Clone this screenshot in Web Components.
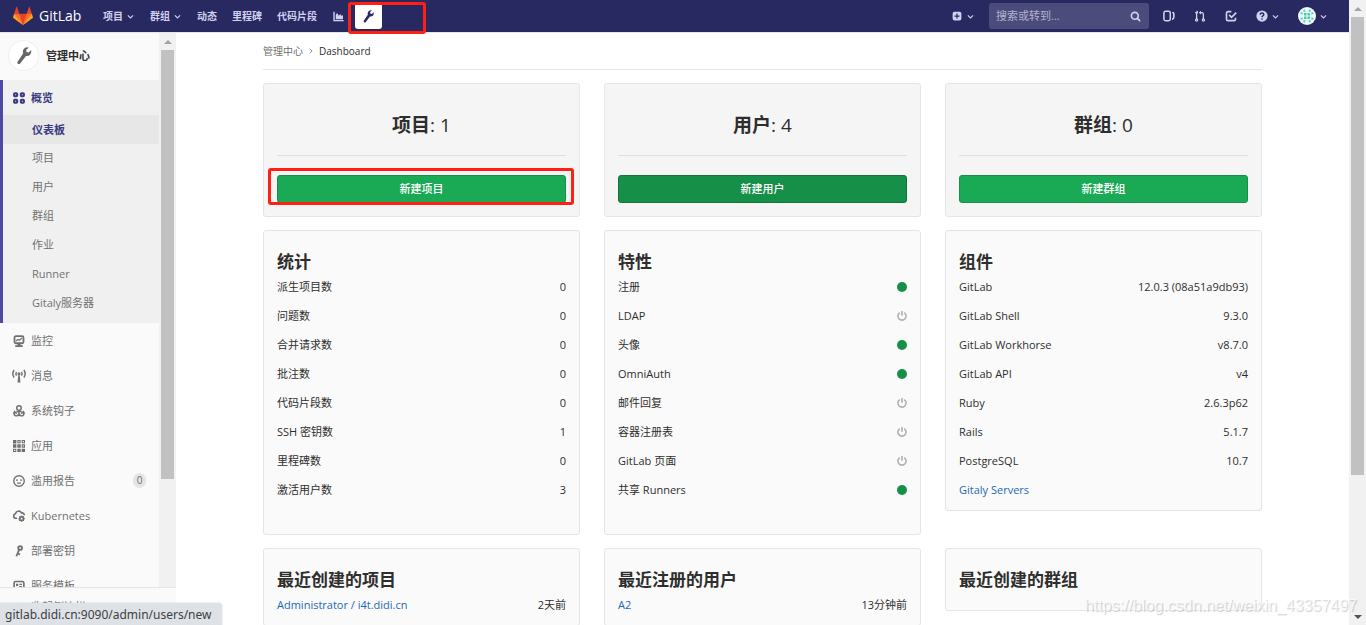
<!DOCTYPE html>
<html lang="zh-CN">
<head>
<meta charset="utf-8">
<title>Dashboard · 管理中心 · GitLab</title>
<style>
html, body { margin: 0; height: 100%; }
body { font: 11px/16px "Open Sans", "Noto Sans CJK SC", sans-serif; color: #2e2e2e; background: #fff; overflow: hidden; }
</style>
</head>
<body>
<admin-app></admin-app>
<script>
const define = (name, html, setup) => {
  const template = document.createElement('template');
  template.innerHTML = html;
  customElements.define(name, class extends HTMLElement {
    constructor() {
      super();
      this.attachShadow({ mode: 'open' }).append(template.content.cloneNode(true));
    }
    connectedCallback() { if (setup) setup(this, this.shadowRoot); }
  });
};

const ICONS = {
  tanuki: ['0 0 36 36', '<path fill="#e24329" d="M2 14l9.38 9v-9l-4-12.28c-.2-.63-1.18-.63-1.38 0zM34 14l-9.38 9v-9l4-12.28c.2-.63 1.18-.63 1.38 0zM18 34.38L3 14h30z"/><path fill="#fc6d26" d="M18 34.38L11.38 14H2l4 11zM18 34.38L24.62 14H34l-4 11z"/><path fill="#fca326" d="M2 14L.1 20.16c-.18.56 0 1.2.5 1.56L18 34.38zM34 14l1.9 6.16c.18.56 0 1.2-.5 1.56L18 34.38z"/>'],
  chevron: ['0 0 8 8', '<path d="M1 2.6l3 3 3-3" fill="none" stroke="currentColor" stroke-width="1.2"/>'],
  right: ['0 0 8 8', '<path d="M2.5 1l3 3-3 3" fill="none" stroke="currentColor" stroke-width="1.1"/>'],
  chart: ['0 0 16 16', '<path d="M.5 1h2v12h13v2H.5zM4 12V5.500L6 3l2.500 4 2-2.500L12 7l2.500-1v6z"/>'],
  wrench: ['0 0 16 16', '<path d="M10.800.300a4 4 0 0 0-3.600 5.500L2.300 13a1.400 1.400 0 0 0 2.300 1.700L9.800 8a4 4 0 0 0 4.500-5.300l-2.200 2.200-1.900-.500-.200-1.900L12.300.600a4 4 0 0 0-1.500-.300z"/>'],
  plus: ['0 0 16 16', '<path fill-rule="evenodd" d="M4 1h8a3 3 0 0 1 3 3v8a3 3 0 0 1-3 3H4a3 3 0 0 1-3-3V4a3 3 0 0 1 3-3zm3 3v3H4v2h3v3h2V9h3V7H9V4z"/>'],
  search: ['0 0 16 16', '<g fill="none" stroke="currentColor" stroke-width="2.400"><circle cx="7" cy="7" r="5"/><path d="M10.700 10.700L14 14" stroke-linecap="round"/></g>'],
  issues: ['0 0 16 16', '<rect x="1.200" y="1.800" width="8.500" height="12.500" rx="2.200" fill="none" stroke="currentColor" stroke-width="2"/><path d="M11.800 2.500h1a2.600 2.600 0 0 1 2.700 2.600v4.400a4.200 4.200 0 0 1-3.500 4v-2.200a2 2 0 0 0 1.300-1.800V5z"/>'],
  merge: ['0 0 16 16', '<g fill="none" stroke="currentColor" stroke-width="1.700"><path d="M3.500 4v8M8 3.500h2.500a2 2 0 0 1 2 2V12"/><circle cx="3.500" cy="13.300" r="1.400"/><circle cx="12.500" cy="13.300" r="1.400"/><path d="M1.500 3.500h3"/></g><path d="M3.500.800a2 2 0 1 1-.100 4zM6.300 3.500L9.300 1v5z"/>'],
  todo: ['0 0 16 16', '<g fill="none" stroke="currentColor" stroke-width="2.200"><path d="M8.500 2.200H4a2 2 0 0 0-2 2v8a2 2 0 0 0 2 2h8a2 2 0 0 0 2-2v-2"/><path d="M5.500 6.500l3.200 3.200L15 3.500"/></g>'],
  help: ['0 0 16 16', '<circle cx="8" cy="8" r="7.500"/><path d="M5.500 6.200Q5.700 4 8 4t2.500 2Q10.500 7 9 8 8 8.500 8 9.800" fill="none" stroke="#292961" stroke-width="1.900"/><circle cx="8" cy="12" r="1.100" fill="#292961"/>'],
  avatar: ['0 0 18 18', '<circle cx="9" cy="9" r="9" fill="#f2f5fa"/><path fill="#3fd5a0" d="M6 6h2.500v2.500H6zm3.500 0H12v2.500H9.500zM6 9.500h2.500V12H6zm3.500 0H12V12H9.500zM6 2l2 2.500H5zm6 0l1 2.500h-3zM6 16l2-2.500H5zm6 0l1-2.500h-3zM2 6l2.500-1v3zm14 0l-2.500-1v3zM2 12l2.500 1v-3zm14 0l-2.500 1v-3z"/>'],
  overview: ['0 0 16 16', '<g fill="none" stroke="currentColor" stroke-width="2.800"><rect x="1.500" y="1.700" width="4" height="4" rx="1"/><rect x="10.500" y="1.700" width="4" height="4" rx="1"/><rect x="1.500" y="10.300" width="4" height="4" rx="1"/><rect x="10.500" y="10.300" width="4" height="4" rx="1"/></g>'],
  monitor: ['0 0 16 16', '<rect x="2" y="1.500" width="12" height="9.500" rx="2" fill="none" stroke="currentColor" stroke-width="2.400"/><path d="M4 8l2.500-2 1.800 1L12 4" fill="none" stroke="currentColor" stroke-width="1.700"/><path d="M6 12h4v1.500h3V16H3v-2.500h3z"/>'],
  broadcast: ['0 0 16 16', '<g fill="none" stroke="currentColor" stroke-width="1.900"><path d="M1.500 0Q-2 5 1.500 10M4.700 2.500Q2.900 5 4.700 7.500M14.500 0q3.500 5 0 10M11.300 2.500q1.800 2.500 0 5"/></g><circle cx="8" cy="5" r="2"/><path d="M7.200 6h1.600L10 16.500H6z"/>'],
  hook: ['0 0 16 16', '<g fill="none" stroke="currentColor" stroke-width="2"><circle cx="8" cy="4" r="3"/><path d="M8 7v8M4.500 8.500h7M2 9.500Q.500 14.500 4.500 14.500 7.500 14 7.500 11.500M14 9.500Q15.500 14.500 11.500 14.500 8.500 14 8.500 11.500M.500 11.500L2.200 9 5 11.500M15.500 11.500L13.800 9 11 11.500"/></g>'],
  apps: ['0 0 16 16', '<path d="M0 0h4.500v4.500H0zm0 5.800h4.500v4.500H0zm5.800 0h4.500v4.500H5.800zm0 5.700h4.500V16H5.800zm5.700 0H16V16h-4.500z"/><g fill="none" stroke="currentColor" stroke-width="1.400"><path d="M6.500.700h3v3h-3zM12.300.700h3v3h-3zM12.300 6.500h3v3h-3zM.700 12.300h3v3h-3z"/></g>'],
  abuse: ['0 0 16 16', '<circle cx="8" cy="8" r="7" fill="none" stroke="currentColor" stroke-width="1.800"/><path d="M4 6h2.500v1.800H4zm5.500 0H12v1.800H9.500zM5.500 10h5v1.700h-5z"/>'],
  cloud: ['0 0 16 16', '<path d="M5.500 11H4a3 3 0 0 1-.800-5.900A4.300 4.300 0 0 1 11.300 4 3 3 0 0 1 15 7" fill="none" stroke="currentColor" stroke-width="2.200"/><circle cx="11.500" cy="11.500" r="2.400" fill="none" stroke="currentColor" stroke-width="2.200"/><path d="M11.500 7.200v2m0 4.600v2M7.200 11.500h2m4.600 0h2M8.500 8.500l1.300 1.300m3.400 3.400l1.300 1.300m0-6l-1.300 1.300m-3.400 3.400l-1.300 1.300" stroke="currentColor" stroke-width="1.500"/>'],
  key: ['0 0 16 16', '<g fill="none" stroke="currentColor" stroke-width="2.500"><circle cx="9.500" cy="4" r="2.500"/><path d="M8.300 6L4.500 15M6 11.500l3.500 1"/></g>'],
  template: ['0 0 16 16', '<rect x="1.500" y="2" width="13" height="12" rx="2" fill="none" stroke="currentColor" stroke-width="2.200"/><path d="M4 5h3v3H4zm4.500 0H12v1.500H8.500zm0 3H12v1.500H8.500zM4 10h8v1.500H4z"/>'],
  collapse: ['0 0 16 16', '<path d="M7 3L2.500 8 7 13M14 3L9.500 8 14 13" fill="none" stroke="currentColor" stroke-width="2.400"/>'],
  on: ['0 0 10 10', '<circle cx="5" cy="5" r="5" fill="#168f48"/>'],
  off: ['0 0 10 10', '<g fill="none" stroke="#b0b0b0" stroke-width="1.600"><path d="M2.800 1.600a4.100 4.100 0 1 0 4.400 0"/><path d="M5 0v4.800"/></g>']
};

define('gl-icon', `<style>
:host { display: inline-flex; flex: none; width: 12px; height: 12px; }
svg { width: 100%; height: 100%; fill: currentColor; overflow: visible; }
</style><svg aria-hidden="true"></svg>`, (host, root) => {
  const [box, body] = ICONS[host.getAttribute('name')];
  const svg = root.querySelector('svg');
  svg.setAttribute('viewBox', box);
  svg.innerHTML = body;
});

define('scroll-track', `<style>
:host { display: flex; flex-direction: column; flex: none; width: 17px; box-sizing: border-box; padding: 0 2px; background: #f1f1f1; }
.arrow { height: 17px; flex: none; display: flex; align-items: center; justify-content: center; }
.arrow::before { content: ""; border: 4px solid transparent; border-top-width: 0; border-bottom-color: #a3a3a3; }
.arrow.down::before { border-width: 4px 4px 0; border-top-color: #505050; }
.thumb { background: #c1c1c1; flex: var(--thumb); }
.rest { flex: var(--rest); }
:host([noend]) .down { display: none; }
</style><div class="arrow"></div><div class="thumb"></div><div class="rest"></div><div class="arrow down"></div>`);

define('red-mark', `<style>
:host { position: absolute; box-sizing: border-box; border: 3px solid #ff2013; border-radius: 3px; pointer-events: none; z-index: 2; }
</style>`);

define('top-bar', `<style>
:host { display: flex; align-items: center; height: 32px; flex: none; background: #292961; color: #d1d1f0; border-bottom: 1px solid #e5e5e5; padding: 0 22px 0 13px; }
a, button { color: inherit; text-decoration: none; font: bold 10px/16px "Open Sans", "Noto Sans CJK SC", sans-serif; background: none; border: 0; padding: 0; display: flex; align-items: center; gap: 4px; white-space: nowrap; }
.brand { color: #fff; gap: 6px; font-size: 14px; font-weight: 500; width: 90px; }
.brand gl-icon { width: 20px; height: 20px; }
nav, .tools { display: flex; align-items: center; gap: 16px; }
gl-icon[name=chevron] { width: 7px; height: 7px; }
gl-icon[name=chart] { width: 11px; height: 11px; }
.links { display: flex; gap: 15px; }
.admin { position: relative; margin-left: -5px; }
.admin a { width: 27px; height: 26px; background: #fff; color: #292961; border-radius: 3px; justify-content: center; }
.admin gl-icon { width: 13px; height: 13px; }
red-mark { left: -7px; top: -1px; width: 78px; height: 32px; }
.tools { margin-left: auto; gap: 19px; }
.tools .new { margin-right: -4px; gap: 5px; }
.tools .new gl-icon[name=plus] { width: 10px; height: 10px; }
form { display: flex; align-items: center; width: 160px; height: 26px; box-sizing: border-box; padding: 0 8px 0 7px; margin-right: -5px; border-radius: 3px; background: #4c4c7c; }
input { flex: 1; min-width: 0; border: 0; padding: 0; background: none; outline: 0; color: #fff; font: 11px/16px "Open Sans", "Noto Sans CJK SC", sans-serif; }
input::placeholder { color: #b4b4d2; opacity: 1; }
form gl-icon { width: 11px; height: 11px; }
.user gl-icon[name=avatar] { width: 18px; height: 18px; }
.help { gap: 4px; }
</style>
<a class="brand" href="#"><gl-icon name="tanuki"></gl-icon>GitLab</a>
<nav>
<button>项目<gl-icon name="chevron"></gl-icon></button>
<button>群组<gl-icon name="chevron"></gl-icon></button>
<div class="links"><a href="#">动态</a><a href="#">里程碑</a><a href="#">代码片段</a></div>
<a href="#" aria-label="实例统计"><gl-icon name="chart"></gl-icon></a>
<div class="admin"><a href="#" aria-label="管理中心"><gl-icon name="wrench"></gl-icon></a><red-mark></red-mark></div>
</nav>
<div class="tools">
<button class="new" aria-label="新建"><gl-icon name="plus"></gl-icon><gl-icon name="chevron"></gl-icon></button>
<form><input type="search" placeholder="搜索或转到..." aria-label="搜索或转到"><gl-icon name="search"></gl-icon></form>
<a href="#" aria-label="议题"><gl-icon name="issues"></gl-icon></a>
<a href="#" aria-label="合并请求"><gl-icon name="merge"></gl-icon></a>
<a href="#" aria-label="待办事项"><gl-icon name="todo"></gl-icon></a>
<button class="help" aria-label="帮助"><gl-icon name="help"></gl-icon><gl-icon name="chevron"></gl-icon></button>
<button class="user" aria-label="用户菜单"><gl-icon name="avatar"></gl-icon><gl-icon name="chevron"></gl-icon></button>
</div>`);

define('side-link', `<style>
:host { display: block; }
a { display: flex; align-items: center; gap: 6px; height: 35px; box-sizing: border-box; padding: 0 13px; color: #707070; text-decoration: none; white-space: nowrap; }
:host([sub]) a { height: 29px; padding-left: 32px; padding-bottom: 2px; }
:host([active]) a { color: #393982; font-weight: bold; border-left: 3px solid #4b4ba3; padding-left: 10px; }
:host([sub][active]) a { background: #e7e7e7; padding: 0 0 0 29px; }
.count { margin-left: auto; min-width: 13px; box-sizing: border-box; height: 15px; border-radius: 8px; background: #e5e5e5; font-size: 10px; line-height: 15px; text-align: center; }
.count:empty { display: none; }
</style><a href="#"><slot></slot><span class="count"></span></a>`, (host, root) => {
  if (host.hasAttribute('icon')) {
    const icon = document.createElement('gl-icon');
    icon.setAttribute('name', host.getAttribute('icon'));
    root.querySelector('a').prepend(icon);
  }
  root.querySelector('.count').textContent = host.getAttribute('count') || '';
});

define('admin-sidebar', `<style>
:host { display: flex; flex-direction: column; width: 176px; flex: none; background: #fafafa; min-height: 0; }
.scroll { flex: 1; min-height: 0; display: flex; overflow: hidden; }
nav { flex: 1; min-width: 0; }
.context { display: flex; align-items: center; gap: 8px; height: 47px; box-sizing: border-box; padding: 0 0 2px 9px; color: #2e2e2e; font-weight: bold; text-decoration: none; }
.context span { display: flex; align-items: center; justify-content: center; width: 29px; height: 29px; border-radius: 50%; background: #fff; box-shadow: 0 0 0 1px #f0f0f0; color: #666; }
.context gl-icon { width: 18px; height: 18px; }
.group { background: #f0f0f0; box-shadow: inset 3px 0 #4b4ba3; padding-bottom: 5px; }
scroll-track { --thumb: 430; --rest: 108; }
button { display: flex; align-items: center; gap: 6px; height: 38px; box-sizing: border-box; flex: none; padding: 0 13px; border: 0; border-top: 1px solid #e5e5e5; background: #fafafa; color: #707070; font: inherit; }
</style>
<div class="scroll"><nav aria-label="管理中心">
<a class="context" href="#"><span><gl-icon name="wrench"></gl-icon></span>管理中心</a>
<div class="group">
<side-link icon="overview" active>概览</side-link>
<side-link sub active>仪表板</side-link>
<side-link sub>项目</side-link><side-link sub>用户</side-link><side-link sub>群组</side-link>
<side-link sub>作业</side-link><side-link sub>Runner</side-link><side-link sub>Gitaly服务器</side-link>
</div>
<side-link icon="monitor">监控</side-link>
<side-link icon="broadcast">消息</side-link>
<side-link icon="hook">系统钩子</side-link>
<side-link icon="apps">应用</side-link>
<side-link icon="abuse" count="0">滥用报告</side-link>
<side-link icon="cloud">Kubernetes</side-link>
<side-link icon="key">部署密钥</side-link>
<side-link icon="template">服务模板</side-link>
</nav><scroll-track noend></scroll-track></div>
<button><gl-icon name="collapse"></gl-icon>收起侧边栏</button>`);

define('count-card', `<style>
:host { display: block; box-sizing: border-box; position: relative; background: #f5f5f5; border: 1px solid #e5e5e5; border-radius: 3px; padding: 27px 13px 13px; text-align: center; }
h3 { margin: 0; font-size: 19px; line-height: 28px; font-weight: bold; }
h3 span { font-weight: 400; }
hr { margin: 16px 0 19px; border: 0; border-top: 1px solid #dfdfdf; }
button { display: block; width: 100%; height: 28px; border: 1px solid #168f48; border-radius: 3px; background: #1aaa55; color: #fff; font: 500 11px/16px "Open Sans", "Noto Sans CJK SC", sans-serif; }
:host([hovered]) button { background: #168f48; border-color: #12753a; }
red-mark { left: 4px; right: 5px; bottom: 11px; height: 37px; }
:host(:not([marked])) red-mark { display: none; }
</style><h3><slot></slot><span></span></h3><hr><button></button><red-mark></red-mark>`, (host, root) => {
  root.querySelector('h3 span').textContent = ': ' + host.getAttribute('count');
  root.querySelector('button').textContent = host.getAttribute('action');
});

define('info-card', `<style>
:host { display: block; box-sizing: border-box; background: #fafafa; border: 1px solid #e5e5e5; border-radius: 3px; padding: 21px 13px 6px; }
:host([tall]) { padding-bottom: 30px; }
:host([bare]) { padding-bottom: 20px; }
h4 { margin: 0; font-size: 17px; line-height: 20px; font-weight: bold; }
</style><h4></h4><slot></slot>`, (host, root) => {
  root.querySelector('h4').textContent = host.getAttribute('heading');
});

define('info-row', `<style>
:host { display: flex; align-items: center; justify-content: space-between; height: 29px; }
::slotted(a) { color: #1b69b6; text-decoration: none; }
gl-icon { width: 10px; height: 10px; }
</style><slot></slot><span></span>`, (host, root) => {
  const end = root.querySelector('span');
  const state = host.getAttribute('state');
  if (state) {
    const icon = document.createElement('gl-icon');
    icon.setAttribute('name', state);
    icon.setAttribute('role', 'img');
    icon.setAttribute('aria-label', state === 'on' ? '已启用' : '已禁用');
    end.style.display = 'flex';
    end.append(icon);
  } else end.textContent = host.getAttribute('value') || '';
});

define('dash-board', `<style>
:host { display: block; flex: 1; min-width: 0; overflow: hidden; }
main { max-width: 999px; margin: 0 auto; }
.crumbs { display: flex; align-items: center; gap: 5px; height: 36px; border-bottom: 1px solid #e5e5e5; font-size: 10px; margin-bottom: 13px; color: #2e2e2e; }
.crumbs a { color: #707070; text-decoration: none; }
.crumbs gl-icon { width: 6px; height: 6px; color: #707070; }
.grid { display: grid; grid-template-columns: repeat(3, 1fr); gap: 13px 24px; align-items: start; }
</style><main>
<nav class="crumbs" aria-label="路径"><a href="#">管理中心</a><gl-icon name="right"></gl-icon><span>Dashboard</span></nav>
<div class="grid">
<count-card count="1" action="新建项目" marked>项目</count-card>
<count-card count="4" action="新建用户" hovered>用户</count-card>
<count-card count="0" action="新建群组">群组</count-card>
<info-card heading="统计" tall>
<info-row value="0">派生项目数</info-row><info-row value="0">问题数</info-row><info-row value="0">合并请求数</info-row><info-row value="0">批注数</info-row>
<info-row value="0">代码片段数</info-row><info-row value="1">SSH 密钥数</info-row><info-row value="0">里程碑数</info-row><info-row value="3">激活用户数</info-row>
</info-card>
<info-card heading="特性" tall>
<info-row state="on">注册</info-row><info-row state="off">LDAP</info-row><info-row state="on">头像</info-row><info-row state="on">OmniAuth</info-row>
<info-row state="off">邮件回复</info-row><info-row state="off">容器注册表</info-row><info-row state="off">GitLab 页面</info-row><info-row state="on">共享 Runners</info-row>
</info-card>
<info-card heading="组件">
<info-row value="12.0.3 (08a51a9db93)">GitLab</info-row><info-row value="9.3.0">GitLab Shell</info-row><info-row value="v8.7.0">GitLab Workhorse</info-row><info-row value="v4">GitLab API</info-row>
<info-row value="2.6.3p62">Ruby</info-row><info-row value="5.1.7">Rails</info-row><info-row value="10.7">PostgreSQL</info-row><info-row><a href="#">Gitaly Servers</a></info-row>
</info-card>
<info-card heading="最近创建的项目"><info-row value="2天前"><a href="#">Administrator / i4t.didi.cn</a></info-row></info-card>
<info-card heading="最近注册的用户"><info-row value="13分钟前"><a href="#">A2</a></info-row></info-card>
<info-card heading="最近创建的群组" bare></info-card>
</div></main>`);

define('admin-app', `<style>
:host { display: flex; height: 100vh; position: relative; overflow: hidden; }
.page { flex: 1; min-width: 0; display: flex; flex-direction: column; }
.body { flex: 1; min-height: 0; display: flex; }
scroll-track { --thumb: 458; --rest: 133; }
.status { position: absolute; left: 0; bottom: 0; height: 22px; box-sizing: border-box; padding: 0 10px 0 5px; background: #dee1e6; color: #3c4043; font: 12px/23px "Noto Sans", sans-serif; border-top-right-radius: 4px; box-shadow: 0 0 2px #ccc; }
.watermark { position: absolute; right: 9px; bottom: 9px; font: 16px/20px "Liberation Sans", sans-serif; color: rgba(255,255,255,.7); text-shadow: 1px 1px 1px rgba(0,0,0,.2); }
</style>
<div class="page"><top-bar></top-bar><div class="body"><admin-sidebar></admin-sidebar><dash-board></dash-board></div></div>
<scroll-track></scroll-track>
<div class="status">gitlab.didi.cn:9090/admin/users/new</div>
<div class="watermark">https://blog.csdn.net/weixin_43357497</div>`);
</script>
</body>
</html>
